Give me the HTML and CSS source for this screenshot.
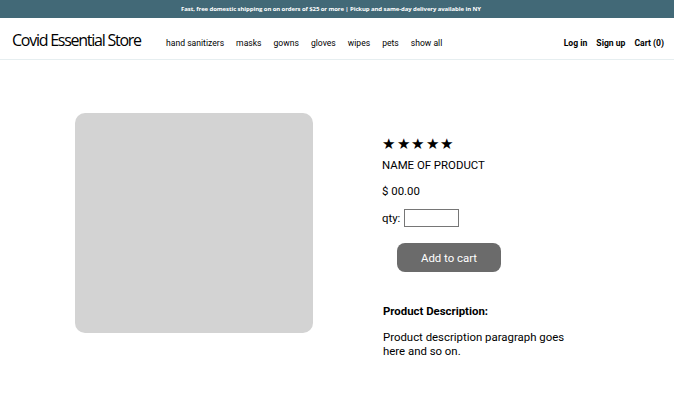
FILE: index.html
```html
<!DOCTYPE html>
<html>
<head>
<meta charset="utf-8">
<link rel="stylesheet" href="styles.css">
</head>
<body>
<div class="banner">Fast, free domestic shipping on on orders of $25 or more | Pickup and same-day delivery available in NY</div>
<header class="header">
  <div class="logo">Covid Essential Store</div>
  <nav class="nav">
    <a>hand sanitizers</a><a>masks</a><a>gowns</a><a>gloves</a><a>wipes</a><a>pets</a><a>show all</a>
  </nav>
  <div class="account">
    <a>Log in</a><a>Sign up</a><a>Cart (0)</a>
  </div>
</header>
<main class="product">
  <div class="photo"></div>
  <div class="details">
    <div class="stars">★★★★★</div>
    <div class="name">NAME OF PRODUCT</div>
    <div class="price">$ 00.00</div>
    <div class="qty">qty: <input class="qty-input" type="text"></div>
    <button class="add">Add to cart</button>
    <div class="desc-title">Product Description:</div>
    <p class="desc">Product description paragraph goes here and so on.</p>
  </div>
</main>
</body>
</html>
```
FILE: styles.css
```css
* { box-sizing: border-box; }
body {
  margin: 0;
  font-family: Roboto, "Liberation Sans", sans-serif;
  color: #000;
  background: #fff;
}
.banner {
  height: 18px;
  background: #426977;
  color: #fff;
  font-family: "Open Sans", sans-serif;
  font-weight: 700;
  font-size: 6px;
  line-height: 18px;
  text-align: center;
  letter-spacing: -0.1px;
  padding-right: 12px;
}
.header {
  display: flex;
  align-items: center;
  height: 42px;
  padding: 0 10px 0 12px;
  border-bottom: 1px solid #e6eef0;
}
.logo {
  font-family: "Open Sans", sans-serif;
  font-size: 16px;
  letter-spacing: -1.25px;
  width: 154px;
  padding-top: 2px;
}
.nav {
  display: flex;
  gap: 12px;
  font-size: 8.6px;
  flex: 1;
  padding-top: 8px;
}
.account {
  display: flex;
  gap: 9px;
  font-size: 8.6px;
  font-weight: 700;
  padding-top: 8px;
}
.product {
  display: flex;
  padding: 53px 0 0 75px;
  gap: 69px;
}
.photo {
  width: 238px;
  height: 220px;
  background: #d3d3d3;
  border-radius: 10px;
}
.details {
  display: flex;
  flex-direction: column;
  align-items: flex-start;
  padding-top: 23px;
  font-size: 11.4px;
}
.stars {
  font-size: 15px;
  letter-spacing: 1.5px;
  line-height: 16px;
}
.name { margin-top: 6px; line-height: 14px; }
.price { margin-top: 12px; line-height: 14px; }
.qty {
  margin-top: 11px;
  display: flex;
  align-items: center;
  gap: 4px;
  line-height: 14px;
}
.qty-input {
  width: 55px;
  height: 18px;
  border: 1px solid #767676;
  padding: 0;
  margin: 0;
}
.add {
  margin: 16px 0 0 15px;
  width: 104px;
  height: 29px;
  background: #6b6b6b;
  color: #fff;
  border: none;
  border-radius: 8px;
  font-family: Roboto, sans-serif;
  font-size: 11.4px;
}
.desc-title {
  margin-top: 32px;
  margin-left: 1px;
  font-weight: 700;
  line-height: 14px;
}
.desc {
  margin: 12px 0 0 1px;
  width: 200px;
  line-height: 14px;
}
```
